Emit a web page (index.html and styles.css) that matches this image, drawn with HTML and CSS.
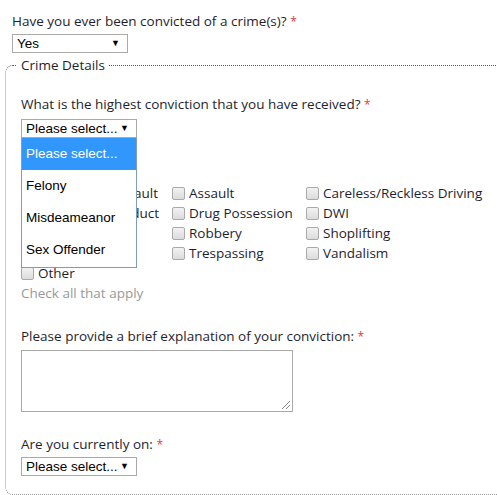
FILE: index.html
```html
<!DOCTYPE html>
<html>
<head>
<meta charset="utf-8">
<link rel="stylesheet" href="styles.css">
</head>
<body>
<div class="page">
  <div class="q q-first">Have you ever been convicted of a crime(s)? <span class="req">*</span></div>
  <div class="sel sel-yes"><span>Yes</span><span class="arrow">▼</span></div>

  <fieldset class="details">
    <legend>Crime Details</legend>
    <div class="inner">
      <div class="q">What is the highest conviction that you have received? <span class="req">*</span></div>
      <div class="dd-wrap">
        <div class="sel"><span>Please select...</span><span class="arrow">▼</span></div>
        <ul class="dd-list">
          <li class="active">Please select...</li>
          <li>Felony</li>
          <li>Misdeameanor</li>
          <li>Sex Offender</li>
        </ul>
      </div>

      <div class="checks">
        <label class="chk"><span class="box"></span>Aggravated Assault</label>
        <label class="chk"><span class="box"></span>Assault</label>
        <label class="chk"><span class="box"></span>Careless/Reckless Driving</label>
        <label class="chk"><span class="box"></span>Disorderly Conduct</label>
        <label class="chk"><span class="box"></span>Drug Possession</label>
        <label class="chk"><span class="box"></span>DWI</label>
        <label class="chk"><span class="box"></span>Fraud</label>
        <label class="chk"><span class="box"></span>Robbery</label>
        <label class="chk"><span class="box"></span>Shoplifting</label>
        <label class="chk"><span class="box"></span>Theft</label>
        <label class="chk"><span class="box"></span>Trespassing</label>
        <label class="chk"><span class="box"></span>Vandalism</label>
        <label class="chk"><span class="box"></span>Other</label>
      </div>
      <div class="hint">Check all that apply</div>

      <div class="q q-expl">Please provide a brief explanation of your conviction: <span class="req">*</span></div>
      <div class="ta"><span class="grip"></span></div>

      <div class="q q-on">Are you currently on: <span class="req">*</span></div>
      <div class="sel"><span>Please select...</span><span class="arrow">▼</span></div>
    </div>
  </fieldset>
</div>
</body>
</html>
```
FILE: styles.css
```css
html, body {
  margin: 0;
  padding: 0;
  overflow: hidden;
  background: #fff;
}
body {
  font-family: "Open Sans", "DejaVu Sans", sans-serif;
  font-size: 13.5px;
  color: #1e1e2e;
  width: 497px;
  height: 495px;
}
.page {
  padding: 12px 0 0 12px;
}
.q {
  line-height: 18px;
  height: 18px;
  white-space: nowrap;
}
.req {
  color: #e53935;
  font-size: 12px;
}
.sel {
  box-sizing: border-box;
  width: 116px;
  height: 19px;
  border: 1px solid #a9a9a9;
  background: #fff;
  display: flex;
  align-items: center;
  justify-content: space-between;
  padding: 0 7px 0 4px;
  font-family: "Liberation Sans", Arial, sans-serif;
  font-size: 13.5px;
  color: #000;
  margin-top: 4px;
}
.sel .arrow {
  font-size: 9px;
  line-height: 1;
}
.details {
  margin: 3px 0 0 -7px;
  width: 560px;
  border: 1px dotted #555;
  border-left-color: #999;
  border-bottom-color: #999;
  border-radius: 8px 0 0 8px;
  padding: 0 0 18px 11px;
}
.details legend {
  padding: 0 4px;
  line-height: 18px;
  color: #1e1e2e;
}
.inner {
  padding: 0 0 0 4px;
  position: relative;
}
.inner > .q:first-child {
  margin-top: 21px;
}
.dd-wrap {
  position: relative;
  padding-top: 2px;
}
.dd-list {
  position: absolute;
  left: 0;
  top: 25px;
  width: 116px;
  box-sizing: border-box;
  margin: 0;
  padding: 0 0 1px 0;
  list-style: none;
  background: #fff;
  border: 1px solid #7f9db9;
  border-top: none;
  font-family: "Liberation Sans", Arial, sans-serif;
  font-size: 13.5px;
  color: #000;
  z-index: 5;
}
.dd-list li {
  height: 32px;
  line-height: 32px;
  padding-left: 4px;
}
.dd-list li.active {
  background: #3297fd;
  color: #fff;
}
.checks {
  display: grid;
  grid-template-columns: 151px 134px auto;
  grid-auto-rows: 20px;
  margin-top: 45px;
}
.chk {
  display: flex;
  align-items: center;
  white-space: nowrap;
  line-height: 20px;
}
.box {
  box-sizing: border-box;
  width: 13px;
  height: 13px;
  border: 1px solid #a9a9a9;
  border-radius: 2px;
  background: linear-gradient(#f2f2f2, #dcdcdc);
  margin-right: 4px;
  flex: none;
}
.hint {
  color: #999;
  line-height: 20px;
}
.q-expl {
  margin-top: 24px;
}
.ta {
  box-sizing: border-box;
  width: 272px;
  height: 62px;
  border: 1px solid #a9a9a9;
  margin-top: 5px;
  position: relative;
}
.grip {
  position: absolute;
  right: 2px;
  bottom: 2px;
  width: 8px;
  height: 8px;
  background: linear-gradient(135deg, transparent 45%, #888 45%, #888 52%, transparent 52%, transparent 70%, #888 70%, #888 77%, transparent 77%);
}
.q-on {
  margin-top: 23px;
}
```
